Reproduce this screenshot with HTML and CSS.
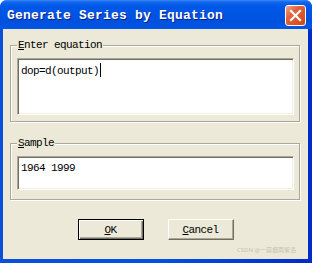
FILE: index.html
```html
<!DOCTYPE html>
<html lang="en">
<head>
  <meta charset="UTF-8">
  <title>Generate Series by Equation</title>
  <link rel="stylesheet" href="styles.css">
</head>
<body>
  <div class="window">
    <div class="titlebar">
      <span class="title">Generate Series by Equation</span>
      <button class="close" type="button">
        <svg width="13" height="13" viewBox="0 0 13 13">
          <path d="M2 2 L11 11 M11 2 L2 11" stroke="#fff" stroke-width="2.2" stroke-linecap="square"/>
        </svg>
      </button>
    </div>
    <div class="client">
      <fieldset class="group">
        <legend><u>E</u>nter equation</legend>
        <div class="edit edit-big">dop=d(output)<span class="caret"></span></div>
      </fieldset>
      <fieldset class="group group-sample">
        <legend><u>S</u>ample</legend>
        <div class="edit edit-small">1964 1999</div>
      </fieldset>
      <div class="buttons">
        <button class="btn btn-default" type="button"><u>O</u>K</button>
        <button class="btn" type="button"><u>C</u>ancel</button>
      </div>
      <div class="watermark">CSDN @一蓑烟雨紫洛</div>
    </div>
  </div>
</body>
</html>
```

FILE: styles.css
```css
body {
  margin: 0;
  background: #fff;
}
.window {
  width: 312px;
  height: 263px;
  display: flex;
  flex-direction: column;
  border-radius: 7px 7px 0 0;
  background: linear-gradient(to right, #0a4fdc, #0050e6 50%, #002bc8);
  box-sizing: border-box;
}
.titlebar {
  height: 29px;
  display: flex;
  align-items: center;
  justify-content: space-between;
  padding: 0 6px 0 7px;
  border-radius: 7px 7px 0 0;
  background: linear-gradient(to bottom, #3d8af7 0, #1066ee 2px, #0058e8 6px, #0054e3 50%, #0050dd 75%, #0058e6 100%);
}
.title {
  font-family: "Liberation Mono", monospace;
  font-weight: bold;
  font-size: 13px;
  letter-spacing: 0.2px;
  color: #fff;
  text-shadow: 1px 1px 0 #0a1e8c;
  margin-top: 1px;
}
.close {
  width: 21px;
  height: 21px;
  padding: 0;
  margin-top: 2px;
  border: 1px solid #fff;
  border-radius: 3px;
  background: linear-gradient(135deg, #f0a58a 0, #e2643e 35%, #cf4514 100%);
  display: flex;
  align-items: center;
  justify-content: center;
}
.client {
  position: relative;
  flex: 1;
  margin: 0 4px 4px 3px;
  padding-top: 10px;
  background: #ece9d8;
  font-family: "Liberation Mono", monospace;
  font-size: 11px;
  letter-spacing: -0.6px;
  color: #000;
}
.group {
  margin: 0 8px 0 7px;
  padding: 7px 5px 6px 6px;
  border: 1px solid #aca899;
  box-shadow: inset 1px 1px 0 #fff, 1px 1px 0 #fff;
}
.group legend {
  padding: 0 1px;
  line-height: 12px;
  background: #ece9d8;
}
.group-sample {
  margin-top: 15px;
  padding-bottom: 9px;
}
.edit {
  background: #fff;
  border: 1px solid;
  border-color: #aca899 #fff #fff #aca899;
  box-shadow: inset 1px 1px 0 #716f64, inset -1px -1px 0 #f1efe2;
  padding: 4px 3px;
  line-height: 12px;
  box-sizing: border-box;
}
.edit-big {
  height: 57px;
}
.edit-small {
  height: 34px;
  padding-top: 5px;
}
.caret {
  display: inline-block;
  width: 1px;
  height: 14px;
  background: #000;
  vertical-align: -3px;
  margin-left: 1px;
}
.buttons {
  display: flex;
  justify-content: center;
  gap: 24px;
  margin-top: 19px;
}
.btn {
  width: 66px;
  height: 21px;
  padding: 0;
  font: inherit;
  letter-spacing: inherit;
  background: #ece9d8;
  border: 1px solid;
  border-color: #fff #716f64 #716f64 #fff;
  box-shadow: inset -1px -1px 0 #aca899;
}
.btn-default {
  border: 1px solid #000;
  box-shadow: inset 1px 1px 0 #fff, inset -1px -1px 0 #716f64, inset -2px -2px 0 #aca899;
}
.watermark {
  position: absolute;
  right: 12px;
  bottom: 5px;
  font-family: "Noto Sans", "Noto Sans CJK SC", sans-serif;
  font-size: 6px;
  letter-spacing: 0;
  color: #c4c2b8;
}
```
